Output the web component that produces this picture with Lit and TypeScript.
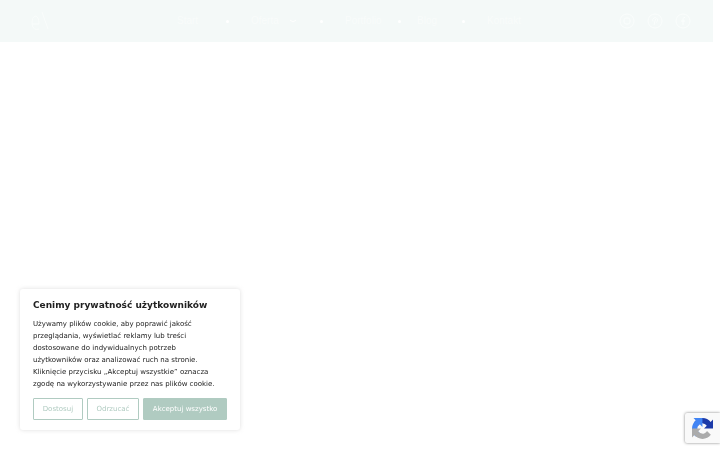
import { LitElement, html, css, svg } from "lit";
import { customElement } from "lit/decorators.js";

const links = ["Start", "Oferta", "Portfolio", "Blog", "Kontakt"];

const socials = [
  { name: "Instagram", shape: svg`<rect x="5" y="5" width="6" height="6" rx="2"/>` },
  { name: "Pinterest", shape: svg`<path d="M7 12l1.500-6M6 8.500a2.500 2.500 0 1 1 3 1"/>` },
  { name: "Facebook", shape: svg`<path d="M10 4.500H9Q8 4.500 8 6v6M6 8h4"/>` },
];

@customElement("site-header")
class SiteHeader extends LitElement {
  static styles = css`
    :host { display: block; margin-right: 7px; background: #f4f9f8; color: #f9fcfb; }
    header { display: grid; grid-template-columns: 157px 1fr auto; align-items: center; height: 42px; padding: 0 22px 0 20px; box-sizing: border-box; }
    a { color: inherit; text-decoration: none; }
    svg { display: block; fill: none; stroke: currentColor; }
    .logo { padding-left: 10px; color: #fafdfc; }
    nav { display: grid; grid-template-columns: 74px 94px 72px 70px auto; font: 10px/14px "Liberation Sans", sans-serif; }
    .item { display: flex; align-items: center; min-width: 0; }
    .item:not(:last-child)::after { content: ""; flex: none; width: 3px; height: 3px; border-radius: 50%; background: #fff; margin-left: auto; margin-right: 22px; }
    .item:nth-child(3)::after { margin-right: 16px; }
    .arrow { margin-left: 10px; color: #fff; }
    .social { display: flex; gap: 12px; color: #fbfefd; }
  `;
  render() {
    return html`<header>
      <a class="logo" href="#" aria-label="Strona główna"><svg width="20" height="22" viewBox="0 0 20 22"><path d="M2 14h7Q9 6 5 6Q2 7 2 14Q3 21 9 19M12 2l6 17"/></svg></a>
      <nav>${links.map((t, i) => html`<div class="item"><a href="#">${t}</a>${i === 1 ? html`<svg class="arrow" width="8" height="5" viewBox="0 0 8 5"><path d="M1 1l3 2 3-2"/></svg>` : ""}</div>`)}</nav>
      <div class="social">${socials.map((s) => html`<a href="#" aria-label=${s.name}><svg width="16" height="16" viewBox="0 0 16 16"><circle cx="8" cy="8" r="7"/>${s.shape}</svg></a>`)}</div>
    </header>`;
  }
}

@customElement("cookie-notice")
class CookieNotice extends LitElement {
  static styles = css`
    :host { display: block; box-sizing: border-box; width: 220px; padding: 7px 13px 10px; background: #fff; border-radius: 3px; box-shadow: 0 0 4px #acabab66; color: #212121; }
    h2 { margin: 0 0 4px; font-size: 9px; line-height: 18px; white-space: nowrap; }
    p { margin: 0 0 8px; font-size: 7px; line-height: 12px; }
    .actions { display: flex; gap: 4px; }
    button { flex: auto; height: 22px; padding: 0 8px; border: 1px solid #b0cbc1; border-radius: 1px; background: transparent; color: #b0cbc1; font: 7px/12px "DejaVu Sans", sans-serif; white-space: nowrap; }
    .accept { background: #b0cbc1; color: #fff; }
  `;
  render() {
    return html`<section aria-labelledby="title">
      <h2 id="title">Cenimy prywatność użytkowników</h2>
      <p>Używamy plików cookie, aby poprawić jakość przeglądania, wyświetlać reklamy lub treści dostosowane do indywidualnych potrzeb użytkowników oraz analizować ruch na stronie. Kliknięcie przycisku „Akceptuj wszystkie” oznacza zgodę na wykorzystywanie przez nas plików cookie.</p>
      <div class="actions"><button>Dostosuj</button><button>Odrzucać</button><button class="accept">Akceptuj wszystko</button></div>
    </section>`;
  }
}

@customElement("app-root")
class AppRoot extends LitElement {
  static styles = css`
    :host { display: block; min-height: 100vh; background: #fff; font-family: "DejaVu Sans", sans-serif; }
    cookie-notice { position: fixed; left: 20px; bottom: 20px; }
    .captcha { position: fixed; right: 0; bottom: 7px; width: 35px; height: 30px; padding: 5px 7px; box-sizing: border-box; overflow: hidden; background: #f9f9f9; border-radius: 2px 0 0 2px; box-shadow: 0 0 3px #808080; }
    .captcha svg { display: block; }
  `;
  render() {
    return html`<site-header></site-header>
      <cookie-notice></cookie-notice>
      <div class="captcha" role="img" aria-label="reCAPTCHA"><svg width="21" height="21" viewBox="0 0 64 64">
        <path fill="#1c3aa9" d="M64 31.955l-.012-1.377V4.687l-7.158 7.158C50.972 4.674 42.033.093 32.052.093c-10.397 0-19.633 4.965-25.471 12.657l11.733 11.857a15.550 15.550 0 0 1 4.754-5.334c2.050-1.600 4.952-2.906 8.983-2.906.487 0 .863.057 1.140.164 4.997.394 9.328 3.150 11.875 7.149l-8.303 8.305z"/>
        <path fill="#4285f4" d="M31.862.094l-1.376.02H4.594l7.157 7.157C4.580 13.129 0 22.068 0 32.050c0 10.387 4.960 19.620 12.657 25.471l11.757-11.735a15.550 15.550 0 0 1-5.334-4.754c-1.600-2.050-2.906-4.952-2.906-8.983 0-.487.057-.863.164-1.140.394-4.997 3.150-9.328 7.149-11.875l8.305 8.303z"/>
        <path fill="#ababab" d="M.001 32.045l.021 1.376v25.892l7.157-7.157c5.858 7.170 14.797 11.750 24.780 11.750 10.387 0 19.620-4.959 25.470-12.665L45.694 39.493a15.550 15.550 0 0 1-4.754 5.334c-2.050 1.600-4.952 2.906-8.983 2.906-.487 0-.863-.057-1.140-.164-4.997-.394-9.328-3.150-11.875-7.149l8.303-8.305z"/>
      </svg></div>`;
  }
}
